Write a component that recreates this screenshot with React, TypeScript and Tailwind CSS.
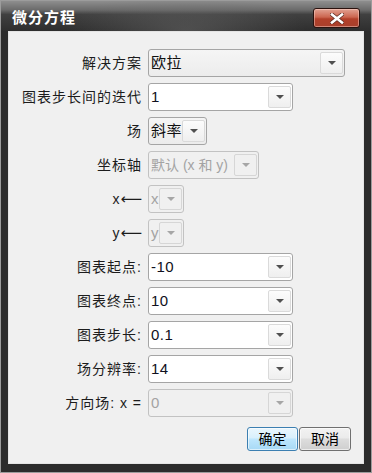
import React from "react";

type ComboProps = {
  value: string;
  width: string;
  disabled?: boolean;
  editable?: boolean;
  small?: boolean;
};

function Arrow({ disabled }: { disabled?: boolean }) {
  return (
    <svg width="8" height="4" viewBox="0 0 8 4">
      <path d="M0 0 H8 L4 4 Z" fill={disabled ? "#a6a6a6" : "#505050"} />
    </svg>
  );
}

function Combo({ value, width, disabled, editable, small }: ComboProps) {
  const box = disabled
    ? "border-[#c2c2c2] bg-[#f0f0f0] text-[#a3a3a3]"
    : editable
      ? "border-[#a5a5a5] bg-white text-[#101020]"
      : "border-[#a5a5a5] bg-[linear-gradient(#f5f5f5,#ececec)] text-[#101010]";

  return (
    <div className={`flex h-[28px] items-stretch rounded-[3px] border ${box} ${width}`}>
      <div
        className={`flex flex-1 items-center overflow-hidden whitespace-nowrap pl-[2px] ${
          small ? "text-[14px] tracking-normal" : "text-[15px] tracking-[0.5px]"
        }`}
      >
        {value}
      </div>
      <div
        className={`my-[2px] mr-[1px] flex w-[23px] shrink-0 items-center justify-center rounded-[2px] border ${
          disabled ? "border-[#d6d6d6]" : "border-[#dadada] bg-[linear-gradient(#fcfcfc,#efefef)]"
        }`}
      >
        <Arrow disabled={disabled} />
      </div>
    </div>
  );
}

const rows: { label: React.ReactNode; key: string; combo: ComboProps }[] = [
  { key: "a", label: "解决方案", combo: { value: "欧拉", width: "w-[197px]" } },
  { key: "b", label: "图表步长间的迭代", combo: { value: "1", width: "w-[145px]", editable: true } },
  { key: "c", label: "场", combo: { value: "斜率", width: "w-[59px]" } },
  { key: "d", label: "坐标轴", combo: { value: "默认 (x 和 y)", width: "w-[111px]", disabled: true, small: true } },
  {
    key: "e",
    label: (
      <>
        x<span className="font-[DejaVu_Sans,sans-serif] text-[15px] tracking-normal">⟵</span>
      </>
    ),
    combo: { value: "x", width: "w-[36px]", disabled: true },
  },
  {
    key: "f",
    label: (
      <>
        y<span className="font-[DejaVu_Sans,sans-serif] text-[15px] tracking-normal">⟵</span>
      </>
    ),
    combo: { value: "y", width: "w-[36px]", disabled: true },
  },
  { key: "g", label: "图表起点:", combo: { value: "-10", width: "w-[145px]", editable: true } },
  { key: "h", label: "图表终点:", combo: { value: "10", width: "w-[145px]", editable: true } },
  { key: "i", label: "图表步长:", combo: { value: "0.1", width: "w-[145px]", editable: true } },
  { key: "j", label: "场分辨率:", combo: { value: "14", width: "w-[145px]", editable: true } },
  { key: "k", label: "方向场: x =", combo: { value: "0", width: "w-[145px]", disabled: true } },
];

export default function App() {
  return (
    <div className="flex h-[473px] w-[372px] flex-col border border-[#9c9c9c] bg-[#2c2c2c] px-[7px] pb-[8px] font-[Liberation_Sans,Noto_Sans_CJK_SC,sans-serif]">
      {/* Title bar */}
      <div className="-mx-[7px] flex h-[30px] shrink-0 items-start justify-between bg-[radial-gradient(ellipse_120px_40px_at_50%_100%,rgba(110,110,110,0.5),transparent),linear-gradient(#8e8e8e,#6a6a6a_30%,#404040_45%,#2e2e2e)] pl-[11px] pr-[11px]">
        <span className="pt-[9px] text-[15px] font-bold leading-[16px] tracking-[1px] text-white">
          微分方程
        </span>
        <div className="mt-[7px] flex h-[20px] w-[47px] items-center justify-center rounded-[3px] border border-[#2a120e] bg-[linear-gradient(#e2a393,#cc6650_45%,#b2402a_55%,#a9402c)] shadow-[inset_0_0_0_1px_rgba(255,220,210,0.45)]">
          <svg width="14" height="11" viewBox="0 0 14 11">
            <path d="M2 1.5 L12 9.5 M12 1.5 L2 9.5" stroke="#5a2a20" strokeWidth="4" strokeLinecap="square" />
            <path d="M2 1.5 L12 9.5 M12 1.5 L2 9.5" stroke="#ffffff" strokeWidth="2.6" strokeLinecap="square" />
          </svg>
        </div>
      </div>

      {/* Content */}
      <div className="flex flex-1 flex-col border border-[#e4e4e4] bg-[#f0f0f0] pt-[17px]">
        <div className="grid grid-cols-[133px_1fr] gap-x-[6px] gap-y-[6px]">
          {rows.map((r) => (
            <React.Fragment key={r.key}>
              <div className="flex h-[28px] items-center justify-end whitespace-nowrap text-[14px] tracking-[1px] text-[#1c1c1c]">
                {r.label}
              </div>
              <Combo {...r.combo} />
            </React.Fragment>
          ))}
        </div>
        <div className="mt-[10px] flex justify-end gap-[1px] pr-[12px]">
          <button className="h-[24px] w-[51px] rounded-[3px] border border-[#3c7fb1] bg-[linear-gradient(#eaf6fd,#d9f0fc_45%,#bee6fd_50%,#a7d9f5)] text-[14px] text-black shadow-[inset_0_0_0_1px_rgba(255,255,255,0.6)]">
            确定
          </button>
          <button className="h-[24px] w-[52px] rounded-[3px] border border-[#707070] bg-[linear-gradient(#f2f2f2,#ebebeb_45%,#dddddd_50%,#cfcfcf)] text-[14px] text-black shadow-[inset_0_0_0_1px_rgba(255,255,255,0.6)]">
            取消
          </button>
        </div>
      </div>
    </div>
  );
}
